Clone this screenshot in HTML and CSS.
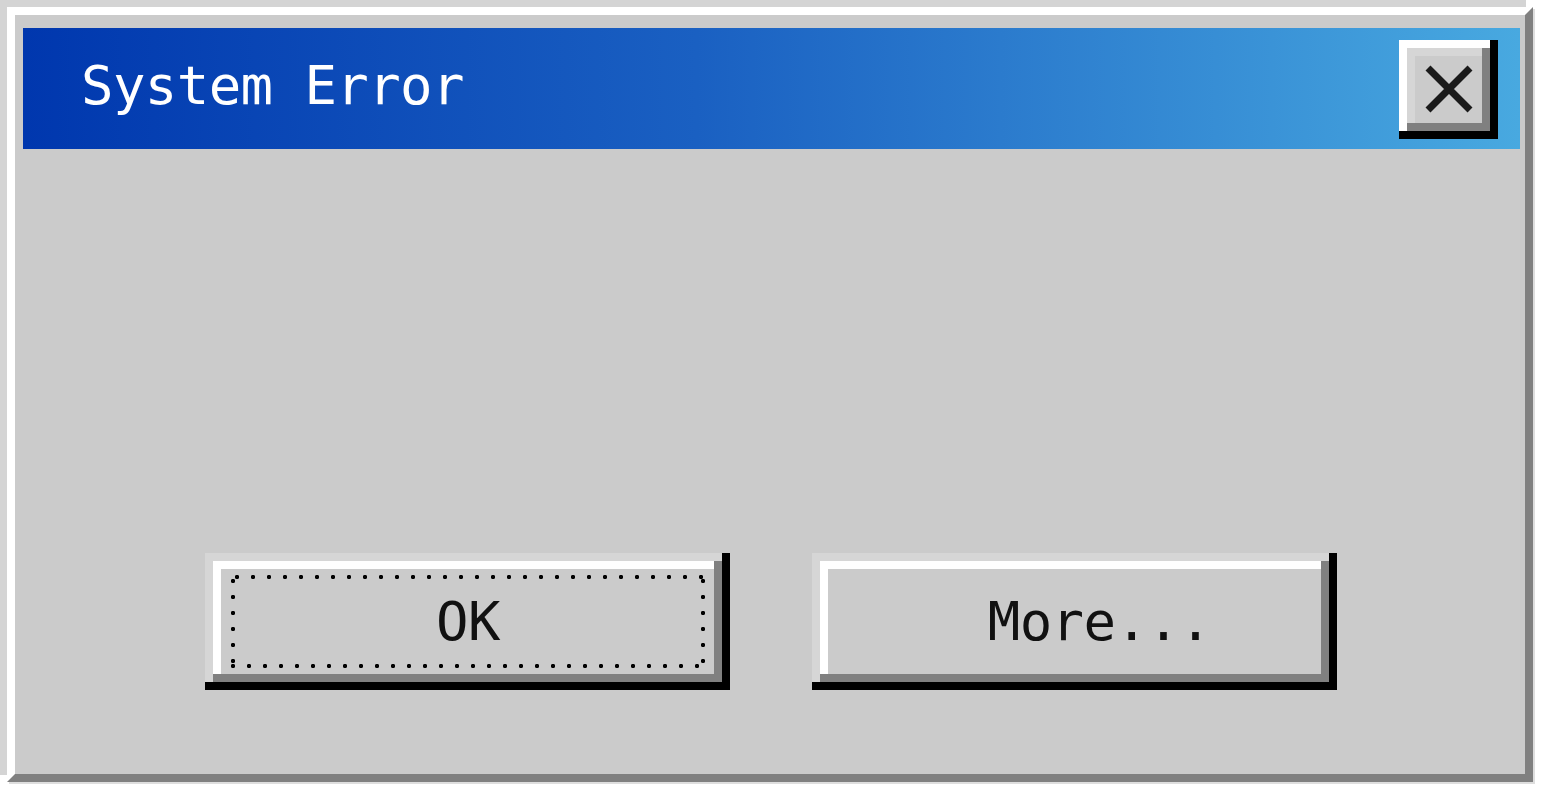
FILE: index.html
```html
<!DOCTYPE html>
<html>
<head>
<meta charset="utf-8">
<title>System Error</title>
<link rel="stylesheet" href="styles.css">
</head>
<body>
<div class="window">
  <div class="titlebar">
    <span class="title">System Error</span>
    <button class="close" aria-label="Close">
      <svg class="x-icon" width="48" height="48" viewBox="0 0 48 48">
        <path d="M3 3 L45 45 M45 3 L3 45" stroke="#1a1a1a" stroke-width="7" fill="none"/>
      </svg>
    </button>
  </div>
  <div class="content">
    <div class="buttons">
      <button class="btn"><span class="focus">OK</span></button>
      <button class="btn"><span class="label more">More...</span></button>
    </div>
  </div>
</div>
</body>
</html>
```
FILE: styles.css
```css
html, body {
  margin: 0;
  padding: 0;
  background: #ffffff;
}

body {
  width: 1542px;
  height: 792px;
  overflow: hidden;
  font-family: "DejaVu Sans Mono", "Liberation Mono", monospace;
}

.window {
  margin: 7px 0 0 7px;
  width: 1510px;
  height: 759px;
  border: 8px solid;
  border-color: #ffffff #808080 #808080 #ffffff;
  background: #cbcbcb;
  box-shadow: -7px -7px 0 0 #d4d4d4, 2px 2px 0 0 #dedede;
  display: flex;
  flex-direction: column;
}

.titlebar {
  margin: 13px 5px 0 8px;
  height: 121px;
  background: linear-gradient(90deg, #0037ae 0%, #1a60c2 45%, #48a9e0 100%);
  display: flex;
  align-items: center;
  justify-content: space-between;
  box-sizing: border-box;
  padding: 0 22px 0 58px;
}

.title {
  color: #ffffff;
  font-size: 54px;
  letter-spacing: -0.6px;
  line-height: 64px;
  padding-bottom: 5px;
}

.close {
  width: 83px;
  height: 83px;
  margin-top: 1px;
  margin-right: 8px;
  padding: 0;
  border: none;
  background: #cbcbcb;
  display: flex;
  align-items: center;
  justify-content: center;
  box-shadow:
    inset -8px -8px 0 0 #808080,
    inset 8px 8px 0 0 #d6d6d6,
    -4px -4px 0 4px #ffffff,
    0 0 0 8px #000000;
}

.x-icon {
  display: block;
}

.content {
  flex: 1;
  display: flex;
  align-items: flex-end;
  justify-content: center;
  padding: 0 0 92px 2px;
}

.buttons {
  display: flex;
  gap: 98px;
}

.btn {
  width: 509px;
  height: 121px;
  padding: 14px 17px 14px 18px;
  border: none;
  background: #cbcbcb;
  font-family: "DejaVu Sans Mono", "Liberation Mono", monospace;
  font-size: 54px;
  letter-spacing: -0.6px;
  line-height: 64px;
  color: #111111;
  display: flex;
  box-sizing: border-box;
  box-shadow:
    inset -8px -8px 0 0 #808080,
    inset 8px 8px 0 0 #ffffff,
    -4px -4px 0 4px #d6d6d6,
    0 0 0 8px #000000;
}

.focus,
.label {
  flex: 1;
  display: flex;
  align-items: center;
  justify-content: center;
}

.focus {
  background:
    radial-gradient(circle at 2px 2px, #000 1.9px, transparent 2.4px) 4px 0 / 16px 4px repeat-x,
    radial-gradient(circle at 2px 2px, #000 1.9px, transparent 2.4px) 0 100% / 16px 4px repeat-x,
    radial-gradient(circle at 2px 2px, #000 1.9px, transparent 2.4px) 0 4px / 4px 16px repeat-y,
    radial-gradient(circle at 2px 2px, #000 1.9px, transparent 2.4px) 100% 4px / 4px 16px repeat-y;
}

.more {
  padding-left: 49px;
}
```
